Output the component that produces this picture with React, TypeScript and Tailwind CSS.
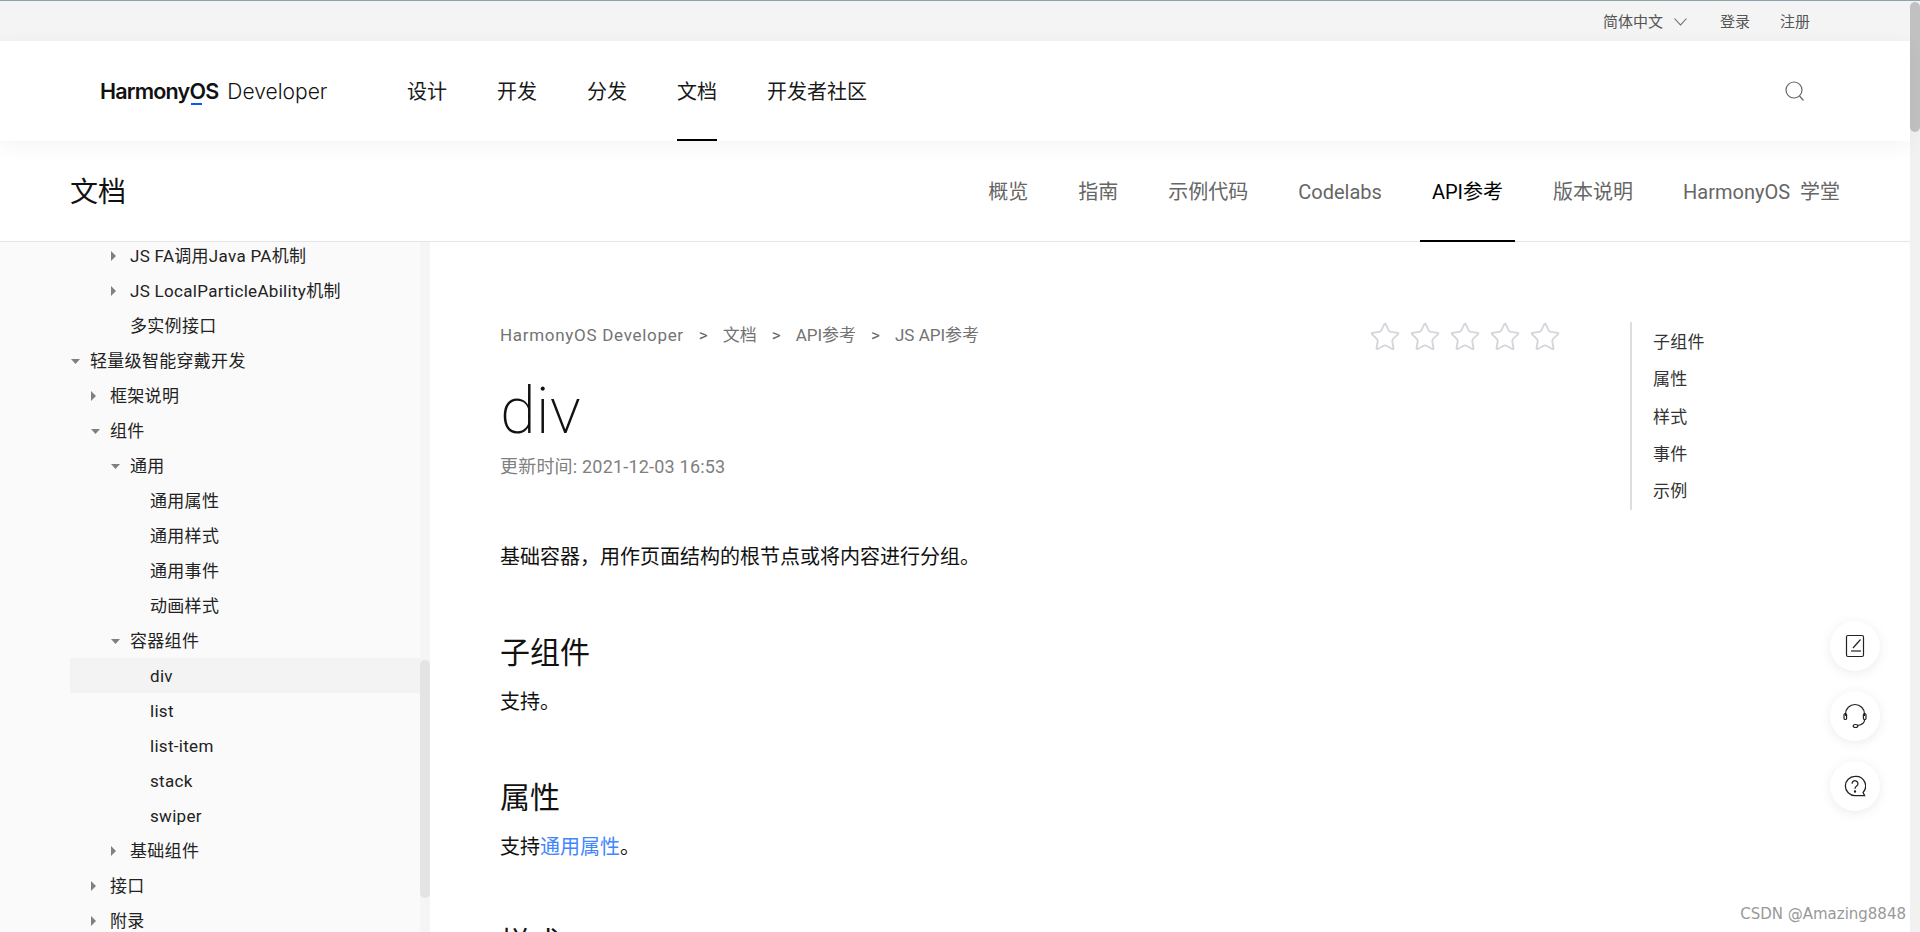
import { Star } from 'lucide-react';

type TreeRow = {
  label: string;
  level: 1 | 2 | 3 | 4;
  arrow?: 'right' | 'down';
  active?: boolean;
};

const treeRows: TreeRow[] = [
  { label: 'JS FA调用Java PA机制', level: 3, arrow: 'right' },
  { label: 'JS LocalParticleAbility机制', level: 3, arrow: 'right' },
  { label: '多实例接口', level: 3 },
  { label: '轻量级智能穿戴开发', level: 1, arrow: 'down' },
  { label: '框架说明', level: 2, arrow: 'right' },
  { label: '组件', level: 2, arrow: 'down' },
  { label: '通用', level: 3, arrow: 'down' },
  { label: '通用属性', level: 4 },
  { label: '通用样式', level: 4 },
  { label: '通用事件', level: 4 },
  { label: '动画样式', level: 4 },
  { label: '容器组件', level: 3, arrow: 'down' },
  { label: 'div', level: 4, active: true },
  { label: 'list', level: 4 },
  { label: 'list-item', level: 4 },
  { label: 'stack', level: 4 },
  { label: 'swiper', level: 4 },
  { label: '基础组件', level: 3, arrow: 'right' },
  { label: '接口', level: 2, arrow: 'right' },
  { label: '附录', level: 2, arrow: 'right' },
];

const levelIndent: Record<TreeRow['level'], string> = {
  1: 'pl-0',
  2: 'pl-[20px]',
  3: 'pl-[40px]',
  4: 'pl-[60px]',
};

const mainNav = ['设计', '开发', '分发', '文档', '开发者社区'];
const subNav = ['概览', '指南', '示例代码', 'Codelabs', 'API参考', '版本说明', 'HarmonyOS 学堂'];
const toc = ['子组件', '属性', '样式', '事件', '示例'];
const crumbs = ['文档', 'API参考', 'JS API参考'];

function TreeArrow({ dir }: { dir: 'right' | 'down' }) {
  return dir === 'right' ? (
    <svg width="20" height="10" viewBox="0 0 20 10" className="shrink-0">
      <polygon points="1,0 6,5 1,10" fill="#808080" />
    </svg>
  ) : (
    <svg width="20" height="10" viewBox="0 0 20 10" className="shrink-0">
      <polygon points="1,3 10,3 5.5,8" fill="#808080" />
    </svg>
  );
}

function Sidebar() {
  return (
    <aside className="flex h-[690px] w-[430px] shrink-0 overflow-hidden bg-[#fafafa]">
      <div className="w-[420px] pl-[70px] -mt-[4px]">
        {treeRows.map((row, i) => (
          <div
            key={i}
            className={`flex h-[35px] items-center ${levelIndent[row.level]} ${row.active ? 'bg-[#f3f3f3]' : ''}`}
          >
            {row.arrow ? <TreeArrow dir={row.arrow} /> : <span className="w-[20px] shrink-0" />}
            <span className="whitespace-nowrap pt-[2px] text-[17px] tracking-[0.3px] text-[#222]">{row.label}</span>
          </div>
        ))}
      </div>
      <div className="w-[10px] shrink-0 bg-[#f5f5f5] pt-[418px]">
        <div className="h-[238px] rounded-[5px] bg-[#e4e4e4]" />
      </div>
    </aside>
  );
}

function Article() {
  return (
    <main className="w-[1130px] shrink-0 pl-[70px] pt-[81px]">
      <div className="flex h-[26px] items-center justify-between">
        <div className="flex items-center text-[17px] text-[#737373]">
          <span className="tracking-[0.7px]">HarmonyOS Developer</span>
          {crumbs.map((c) => (
            <span key={c} className="flex items-center">
              <span className="px-[15px] text-[#666]">&gt;</span>
              <span>{c}</span>
            </span>
          ))}
        </div>
        <div className="mt-[1px] flex gap-[10px]">
          {[0, 1, 2, 3, 4].map((i) => (
            <Star key={i} size={32} strokeWidth={1.4} className="-my-[1px] -mx-[1px] text-[#d5d5dc]" />
          ))}
        </div>
      </div>
      <h1 className="mt-[27px] text-[65px] font-extralight leading-[70px] text-[#111]">div</h1>
      <p className="mt-[8px] text-[18px] leading-[26px] tracking-[0.2px] text-[#808080]">更新时间: 2021-12-03 16:53</p>
      <p className="mt-[62px] text-[20px] leading-[30px] text-[#111]">基础容器，用作页面结构的根节点或将内容进行分组。</p>
      <h2 className="mt-[61px] text-[30px] leading-[40px] text-[#111]">子组件</h2>
      <p className="mt-[14px] text-[20px] leading-[30px] text-[#111]">支持。</p>
      <h2 className="mt-[61px] text-[30px] leading-[40px] text-[#111]">属性</h2>
      <p className="mt-[14px] text-[20px] leading-[30px] text-[#111]">
        支持<span className="text-[#3f86ff]">通用属性</span>。
      </p>
      <h2 className="mt-[61px] text-[30px] leading-[40px] text-[#111]">样式</h2>
    </main>
  );
}

function FloatingButtons() {
  return (
    <div className="absolute left-[1830px] top-[620px] flex flex-col gap-[20px]">
      <div className="flex size-[50px] items-center justify-center rounded-full bg-white shadow-[0_2px_12px_rgba(0,0,0,0.08)]">
        <svg width="20" height="24" viewBox="0 0 20 24" fill="none" stroke="#222" strokeWidth="1.2">
          <rect x="1.5" y="1.5" width="17" height="21" rx="1.5" />
          <path d="M15.5 5.5 L8 14" />
          <path d="M6 17 H16" />
        </svg>
      </div>
      <div className="flex size-[50px] items-center justify-center rounded-full bg-white shadow-[0_2px_12px_rgba(0,0,0,0.08)]">
        <svg width="26" height="26" viewBox="0 0 26 26" fill="none" stroke="#222" strokeWidth="1.2">
          <path d="M3.5 13 V11 a9.5 9.5 0 0 1 19 0 V13" />
          <rect x="2" y="10.5" width="2.6" height="6" rx="1.3" />
          <rect x="21.4" y="10.5" width="2.6" height="6" rx="1.3" />
          <path d="M22.7 16.5 C22.5 20 19 22 15.5 22.5" />
          <ellipse cx="13.5" cy="23" rx="2.3" ry="1.5" />
        </svg>
      </div>
      <div className="flex size-[50px] items-center justify-center rounded-full bg-white shadow-[0_2px_12px_rgba(0,0,0,0.08)]">
        <svg width="22" height="22" viewBox="0 0 24 24" fill="none" stroke="#222" strokeWidth="1.4">
          <path d="M12 1.5 a10.5 10.5 0 1 0 0 21 H22.5 L20.8 19 A10.5 10.5 0 0 0 12 1.5 Z" />
          <path d="M8.8 9.5 a3.2 3.2 0 1 1 5 2.6 c-1.2 .8 -1.8 1.4 -1.8 2.9" />
          <circle cx="12" cy="18" r="0.6" fill="#222" />
        </svg>
      </div>
    </div>
  );
}

export default function App() {
  return (
    <div className="relative flex h-[932px] w-full overflow-hidden border-t border-[#90a4ae] bg-white font-['Roboto','Noto_Sans_CJK_SC',sans-serif]">
      <div className="w-[1910px] shrink-0">
        {/* Utility bar */}
        <div className="flex h-[40px] items-center justify-end gap-[30px] bg-[#f4f4f4] pr-[100px] pt-[2px] text-[15px] text-[#555]">
          <div className="mr-[3px] flex items-center gap-[11px]">
            <span>简体中文</span>
            <svg width="13" height="8" viewBox="0 0 13 8" fill="none" stroke="#666" strokeWidth="1.1">
              <path d="M0.5 0.5 L6.5 7 L12.5 0.5" />
            </svg>
          </div>
          <span>登录</span>
          <span>注册</span>
        </div>

        {/* Main nav */}
        <header className="relative z-10 flex h-[100px] items-center bg-white pl-[100px] pr-[105px] shadow-[0_4px_20px_rgba(0,0,0,0.05)]">
          <div className="flex w-[307px] items-baseline whitespace-nowrap font-['Inter',sans-serif] text-[#111]">
            <span className="text-[21.5px] font-semibold tracking-[-0.8px]">
              Harmony
              <span className="relative">
                O
                <span className="absolute bottom-[-1px] left-[2px] h-[2px] w-[11px] bg-[#0a59f7]" />
              </span>
              S
            </span>
            <span className="ml-[9px] text-[21px] font-light">Developer</span>
          </div>
          <nav className="flex h-full gap-[50px]">
            {mainNav.map((item) => (
              <a
                key={item}
                className={`flex items-center border-b-2 pt-[4px] text-[20px] text-[#191919] ${item === '文档' ? 'border-black' : 'border-transparent'}`}
              >
                {item}
              </a>
            ))}
          </nav>
          <svg className="ml-auto" width="20" height="20" viewBox="0 0 20 20" fill="none" stroke="#666" strokeWidth="1.2">
            <circle cx="9" cy="9" r="8" />
            <path d="M14.5 15 L18.5 19.5" />
          </svg>
        </header>

        {/* Section nav */}
        <div className="flex h-[101px] items-stretch justify-between border-b border-[#e5e5e5] pl-[70px] pr-[70px]">
          <h2 className="flex items-center pt-[4px] text-[28px] text-[#111]">文档</h2>
          <nav className="flex gap-[50px] pt-[2px] [word-spacing:5px]">
            {subNav.map((item) => (
              <a
                key={item}
                className={`relative flex items-center whitespace-nowrap text-[20px] ${item === 'API参考' ? 'text-black' : 'text-[#666]'}`}
              >
                {item}
                {item === 'API参考' && <span className="absolute -bottom-[1px] -left-[12px] -right-[12px] h-[2px] bg-black" />}
              </a>
            ))}
          </nav>
        </div>

        <div className="flex">
          <Sidebar />
          <Article />
          <div className="ml-[70px] mt-[80px] flex h-[188px] w-[120px] flex-col border-l-2 border-[#dddddd] pl-[21px] pt-[2px] text-[17px] tracking-[0.2px] text-[#333]">
            {toc.map((t) => (
              <span key={t} className="leading-[37.25px]">{t}</span>
            ))}
          </div>
        </div>
      </div>

      {/* Page scrollbar */}
      <div className="w-[10px] shrink-0 bg-[#f1f1f1] pt-[1px]">
        <div className="h-[130px] rounded-[5px] bg-[#c1c1c1]" />
      </div>

      <FloatingButtons />
      <span className="absolute bottom-[7px] right-[14px] font-['DejaVu_Sans',sans-serif] text-[15px] text-[#999]">CSDN @Amazing8848</span>
    </div>
  );
}
